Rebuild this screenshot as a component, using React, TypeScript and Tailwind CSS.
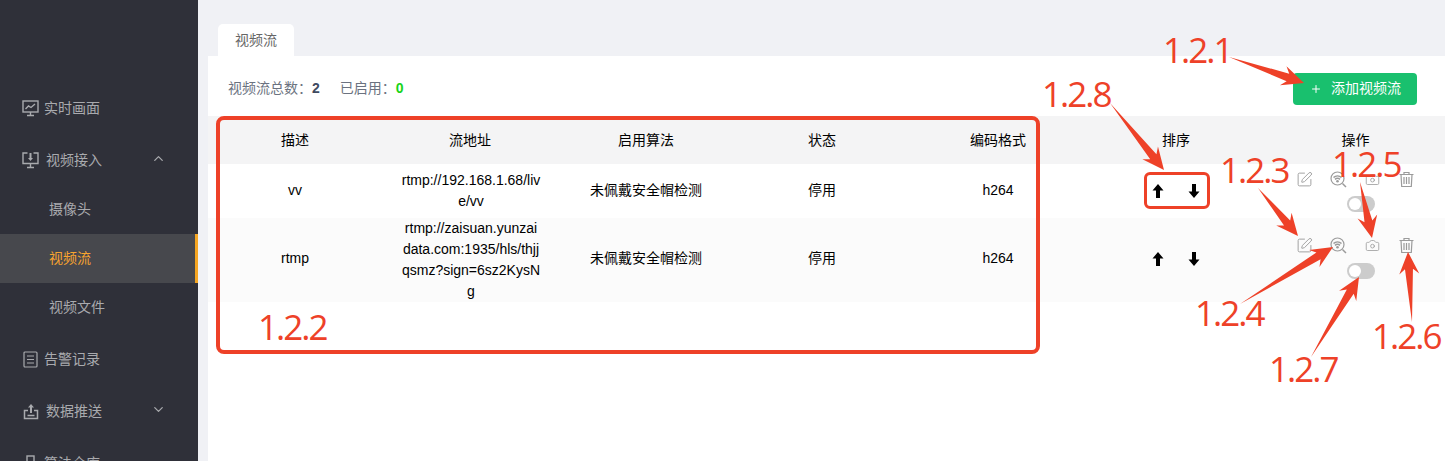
import { ChevronDown, ChevronUp, Plus, SquarePen, Camera } from 'lucide-react';
import { ReactNode } from 'react';

const cjk = "font-['Liberation_Sans','Noto_Sans_CJK_SC',sans-serif]";

const MonitorChartIcon = () => (
    <svg width="17" height="17" viewBox="0 0 17 17" fill="none" stroke="currentColor" strokeWidth="1.400">
        <rect x="1" y="1" width="15" height="11" />
        <path d="M3.500 9l3-3 2.500 1.500L13 4M5 15.500h7M8.500 12v3" />
    </svg>
);

const MonitorDownIcon = () => (
    <svg width="17" height="17" viewBox="0 0 17 17" fill="none" stroke="currentColor" strokeWidth="1.400">
        <path d="M5.500 1H1v10.500h15V1h-4.500M8.500 11.500V15M5 15.500h7" />
        <path d="M8.500 1v6" strokeWidth="2" />
        <path d="M6 6h5L8.500 9z" fill="currentColor" stroke="none" />
    </svg>
);

const ListIcon = () => (
    <svg width="15" height="17" viewBox="0 0 15 17" fill="none" stroke="currentColor" strokeWidth="1.200">
        <rect x="1" y="1" width="13" height="15" rx="1" />
        <path d="M4 5h7M4 8.500h7M4 12h7" />
    </svg>
);

const UploadIcon = () => (
    <svg width="16" height="17" viewBox="0 0 16 17" fill="none" stroke="currentColor" strokeWidth="1.500">
        <path d="M5 7.500H1.500v8h13v-8H11M4.500 12.500h7" />
        <path d="M8 3v7" strokeWidth="2" />
        <path d="M5 4.500L8 1l3 3.500z" fill="currentColor" stroke="none" />
    </svg>
);

const WarehouseIcon = () => (
    <svg width="17" height="17" viewBox="0 0 17 17" fill="none" stroke="currentColor" strokeWidth="1.400">
        <rect x="5" y="1" width="7" height="6" />
        <rect x="1" y="8" width="7" height="7" />
        <rect x="9" y="8" width="7" height="7" />
    </svg>
);

const WifiSearchIcon = () => (
    <svg width="17" height="17" viewBox="0 0 17 17" fill="none" stroke="#9b9b9b" strokeWidth="1.200">
        <circle cx="7.500" cy="7.500" r="6.500" />
        <path d="M12.500 12.500l3.500 3.500" strokeWidth="1.500" />
        <path d="M3.500 6.500c2.300-2 5.700-2 8 0M5 8.300c1.500-1.200 3.500-1.200 5 0" strokeWidth="1.600" />
        <circle cx="7.500" cy="10.300" r="1.300" fill="#9b9b9b" stroke="none" />
    </svg>
);

const TrashIcon = () => (
    <svg width="17" height="17" viewBox="0 0 17 17" fill="none" stroke="#9b9b9b" strokeWidth="1.200">
        <path d="M1.500 3.500h14M6 3.500V1.500h5v2M3 3.500l.7 12h9.600l.7-12" />
        <path d="M6 6v7M8.500 6v7M11 6v7" />
    </svg>
);

const ArrowUp = () => (
    <svg width="12" height="14" viewBox="0 0 12 14" fill="#000">
        <path d="M6 0l5.500 6.500H8V14H4V6.500H.5z" />
    </svg>
);

const ArrowDown = () => (
    <svg width="12" height="14" viewBox="0 0 12 14" fill="#000">
        <path d="M6 14L.5 7.500H4V0h4v7.500h3.500z" />
    </svg>
);

type NavProps = { icon?: ReactNode; label: string; indent?: string; chevron?: 'up' | 'down'; active?: boolean; sub?: boolean };

const NavItem = ({ icon, label, indent, chevron, active, sub }: NavProps) => (
    <div className={`flex items-center shrink-0 ${sub ? 'h-[49px] pl-[49px]' : 'h-[52px] pl-[22px]'} ${active ? 'bg-[#47484d] text-[#f8a42f] border-r-[3px] border-[#f5a623]' : 'text-[#a9aaae]'}`}>
        {icon && <span className="w-[17px] flex justify-center">{icon}</span>}
        <span className={`text-[14px] ${indent ?? ''}`}>{label}</span>
        {chevron === 'up' && <ChevronUp size={15} className="ml-auto mr-[32px] -mt-[3px]" />}
        {chevron === 'down' && <ChevronDown size={15} className="ml-auto mr-[32px] -mt-[3px]" />}
    </div>
);

const Sidebar = () => (
    <aside className="w-[198px] shrink-0 bg-[#2f3039] pt-[82px] flex flex-col overflow-hidden">
        <NavItem icon={<MonitorChartIcon />} label="实时画面" indent="ml-[5px]" />
        <NavItem icon={<MonitorDownIcon />} label="视频接入" indent="ml-[7px]" chevron="up" />
        <div className="-mt-[1px] mb-[1px] flex flex-col">
            <NavItem sub label="摄像头" />
            <NavItem sub active label="视频流" />
            <NavItem sub label="视频文件" />
        </div>
        <NavItem icon={<ListIcon />} label="告警记录" indent="ml-[5px]" />
        <NavItem icon={<UploadIcon />} label="数据推送" indent="ml-[7px]" chevron="down" />
        <NavItem icon={<WarehouseIcon />} label="算法仓库" indent="ml-[5px]" />
    </aside>
);

const gridCols = 'grid grid-cols-[174px_176px_176px_176px_176px_180px_179px]';

const SortCell = ({ offset }: { offset: string }) => (
    <div className={`flex items-center justify-center gap-[24px] ${offset}`}>
        <ArrowUp />
        <ArrowDown />
    </div>
);

const OperationCell = ({ gap }: { gap: string }) => (
    <div className={`flex flex-col items-center ${gap}`}>
        <div className="flex items-center text-[#9b9b9b]">
            <span className="w-[34px] flex justify-center"><SquarePen size={17} strokeWidth={1.3} /></span>
            <span className="w-[34px] flex justify-center"><WifiSearchIcon /></span>
            <span className="w-[34px] flex justify-center"><Camera size={15} strokeWidth={1.3} /></span>
            <span className="w-[34px] flex justify-center"><TrashIcon /></span>
        </div>
        <div className="ml-[10px] w-[28px] h-[16px] rounded-full bg-[#cccccc] p-[2px]">
            <div className="w-[12px] h-[12px] rounded-full bg-white" />
        </div>
    </div>
);

const rows = [
    { name: 'vv', url: 'rtmp://192.168.1.68/live/vv', height: 'h-[54px] pb-[1px]', bg: 'bg-white', gap: 'gap-[8px] mt-[2px]', text: '', sort: '' },
    { name: 'rtmp', url: 'rtmp://zaisuan.yunzaidata.com:1935/hls/thjjqsmz?sign=6sz2KysNg', height: 'h-[84px]', bg: 'bg-[#fbfbfb]', gap: 'gap-[9px] mb-[4px]', text: 'pb-[4px]', sort: 'pb-[2px]' },
];

const StreamTable = () => (
    <div className="text-[14px] text-black">
        <div className={`${gridCols} h-[48px] bg-[#f4f4f5] items-center text-center`}>
            {['描述', '流地址', '启用算法', '状态', '编码格式', '排序', '操作'].map((title) => (
                <div key={title} className="pt-[1px]">{title}</div>
            ))}
        </div>
        {rows.map((row) => (
            <div key={row.name} className={`${gridCols} ${row.height} ${row.bg} items-center text-center`}>
                <div className={row.text}>{row.name}</div>
                <div className="mx-auto w-[139px] break-all leading-[21px] translate-x-[1px]">{row.url}</div>
                <div className={row.text}>未佩戴安全帽检测</div>
                <div className={row.text}>停用</div>
                <div className={row.text}>h264</div>
                <SortCell offset={row.sort} />
                <OperationCell gap={row.gap} />
            </div>
        ))}
    </div>
);

type ArrowProps = { x1: number; y1: number; x2: number; y2: number };

// tapered annotation arrow, from a thin tail to a barbed head
const Arrow = ({ x1, y1, x2, y2 }: ArrowProps) => {
    const len = Math.hypot(x2 - x1, y2 - y1);
    const ux = (x2 - x1) / len;
    const uy = (y2 - y1) / len;
    const at = (back: number, side: number) =>
        `${x2 - ux * back - uy * side},${y2 - uy * back + ux * side}`;
    const points = [`${x1},${y1}`, at(17, 4), at(22, 10), `${x2},${y2}`, at(22, -10), at(17, -4)].join(' ');
    return <polygon points={points} fill="#ee4128" />;
};

const arrows: ArrowProps[] = [
    { x1: 1229, y1: 57, x2: 1304, y2: 83 },
    { x1: 1110, y1: 103, x2: 1164, y2: 170 },
    { x1: 1258, y1: 188, x2: 1298, y2: 236 },
    { x1: 1360, y1: 182, x2: 1372, y2: 238 },
    { x1: 1240, y1: 304, x2: 1333, y2: 247 },
    { x1: 1311, y1: 357, x2: 1359, y2: 277 },
    { x1: 1412, y1: 322, x2: 1408, y2: 252 },
];

const Callout = ({ className, text }: { className: string; text: string }) => (
    <span className={`absolute text-[35px] leading-none text-[#ee4128] font-['Open_Sans',sans-serif] tracking-[-2px] ${className}`}>{text}</span>
);

const Annotations = () => (
    <div className="absolute inset-0 pointer-events-none overflow-hidden">
        <div className="absolute left-[216px] top-[116px] w-[824px] h-[238px] border-[4px] border-[#ee4128] rounded-[8px]" />
        <div className="absolute left-[1144px] top-[172px] w-[66px] h-[37px] border-[3px] border-[#ee4128] rounded-[6px]" />
        <svg className="absolute inset-0" width="1445" height="461">
            {arrows.map((a) => <Arrow key={`${a.x1}-${a.y1}`} {...a} />)}
        </svg>
        <Callout className="left-[1163px] top-[32px]" text="1.2.1" />
        <Callout className="left-[258px] top-[309px]" text="1.2.2" />
        <Callout className="left-[1220px] top-[152px]" text="1.2.3" />
        <Callout className="left-[1195px] top-[295px]" text="1.2.4" />
        <Callout className="left-[1332px] top-[146px]" text="1.2.5" />
        <Callout className="left-[1372px] top-[318px]" text="1.2.6" />
        <Callout className="left-[1269px] top-[351px]" text="1.2.7" />
        <Callout className="left-[1042px] top-[76px]" text="1.2.8" />
    </div>
);

export default function App() {
    return (
        <div className={`relative flex w-[1445px] h-[461px] overflow-hidden bg-[#f0f1f5] ${cjk}`}>
            <Sidebar />
            <main className="flex-1 flex flex-col pl-[10px] pt-[24px] min-w-0">
                <div className="flex pl-[10px]">
                    <div className="w-[76px] h-[32px] bg-white rounded-t-[5px] flex items-center justify-center text-[14px] text-[#666666]">视频流</div>
                </div>
                <section className="flex-1 bg-white">
                    <div className="flex items-center justify-between h-[60px] pl-[20px] pr-[28px]">
                        <div className="flex items-center text-[14px] text-[#6b7280] pt-[4px]">
                            <span>视频流总数：</span>
                            <b className="text-[#3f4a60]">2</b>
                            <span className="ml-[20px]">已启用：</span>
                            <b className="text-[#19d419]">0</b>
                        </div>
                        <button className="w-[124px] h-[32px] mt-[5px] bg-[#19c06e] rounded-[4px] text-white text-[14px] flex items-center pl-[17px] gap-[9px]">
                            <Plus size={12} strokeWidth={2} />
                            <span>添加视频流</span>
                        </button>
                    </div>
                    <StreamTable />
                </section>
            </main>
            <Annotations />
        </div>
    );
}
